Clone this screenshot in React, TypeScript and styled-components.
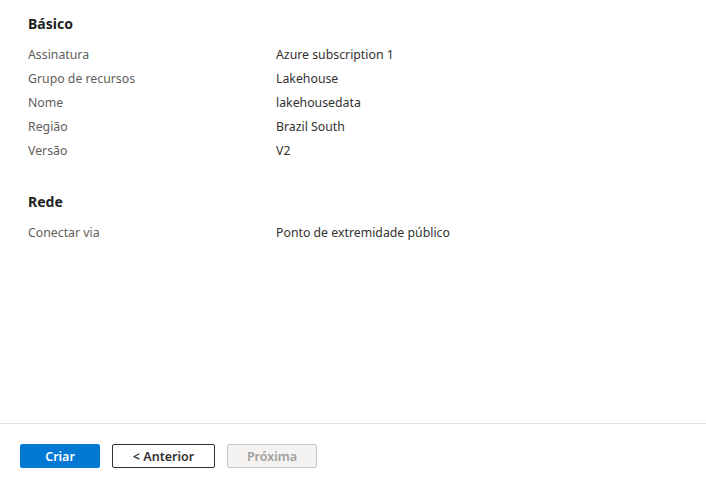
import React from "react";
import styled, { createGlobalStyle } from "styled-components";

const Global = createGlobalStyle`
  html, body { margin: 0; padding: 0; background: #ffffff; }
  body {
    font-family: "Segoe UI", "Noto Sans", "Open Sans", sans-serif;
    font-size: 13px;
    color: #323130;
  }
`;

const Page = styled.div`
  height: 497px;
  display: flex;
  flex-direction: column;
`;

const Main = styled.main`
  flex: 1;
  padding: 14px 28px 0 28px;
`;

const Section = styled.section`
  margin-bottom: 30px;
`;

const Heading = styled.h2`
  margin: 0 0 8px 0;
  font-size: 14px;
  line-height: 20px;
  font-weight: 700;
  color: #201f1e;
`;

const Row = styled.div`
  display: grid;
  grid-template-columns: 248px 1fr;
  height: 24px;
  align-items: center;
  font-size: 12.3px;
`;

const Label = styled.span`
  color: #605e5c;
`;

const Value = styled.span`
  color: #323130;
`;

const Footer = styled.footer`
  border-top: 1px solid #e1dfdd;
  padding: 20px 20px 29px 20px;
  display: flex;
  gap: 12px;
`;

const Button = styled.button<{ $variant: "primary" | "default" | "disabled"; $w: number }>`
  box-sizing: border-box;
  width: ${(p) => p.$w}px;
  height: 24px;
  border-radius: 2px;
  font-family: inherit;
  font-size: 12.5px;
  font-weight: 600;
  padding: 0;
  cursor: ${(p) => (p.$variant === "disabled" ? "default" : "pointer")};
  background: ${(p) =>
    p.$variant === "primary" ? "#0078d4" : p.$variant === "disabled" ? "#f3f2f1" : "#ffffff"};
  color: ${(p) =>
    p.$variant === "primary" ? "#ffffff" : p.$variant === "disabled" ? "#a19f9d" : "#323130"};
  border: 1px solid
    ${(p) =>
      p.$variant === "primary" ? "#0078d4" : p.$variant === "disabled" ? "#c8c6c4" : "#323130"};
`;

const basics = [
  ["Assinatura", "Azure subscription 1"],
  ["Grupo de recursos", "Lakehouse"],
  ["Nome", "lakehousedata"],
  ["Região", "Brazil South"],
  ["Versão", "V2"],
];

const network = [["Conectar via", "Ponto de extremidade público"]];

export default function App() {
  return (
    <>
      <Global />
      <Page>
        <Main>
          <Section>
            <Heading>Básico</Heading>
            {basics.map(([l, v]) => (
              <Row key={l}>
                <Label>{l}</Label>
                <Value>{v}</Value>
              </Row>
            ))}
          </Section>
          <Section>
            <Heading>Rede</Heading>
            {network.map(([l, v]) => (
              <Row key={l}>
                <Label>{l}</Label>
                <Value>{v}</Value>
              </Row>
            ))}
          </Section>
        </Main>
        <Footer>
          <Button $variant="primary" $w={80}>Criar</Button>
          <Button $variant="default" $w={103}>&lt; Anterior</Button>
          <Button $variant="disabled" $w={90} disabled>Próxima</Button>
        </Footer>
      </Page>
    </>
  );
}
